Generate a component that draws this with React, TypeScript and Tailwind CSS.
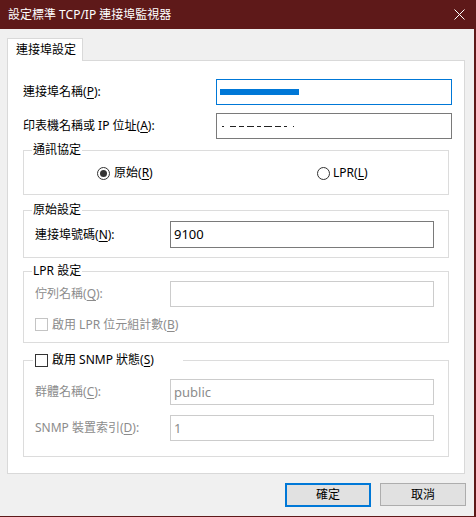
import React from "react";

const font = {
  fontFamily: '"Segoe UI", "Noto Sans", "Microsoft JhengHei", "Noto Sans CJK TC", sans-serif',
};

function Mn({ c }: { c: string }) {
  return (
    <>
      (<span className="underline underline-offset-[2px]">{c}</span>)
    </>
  );
}

function Group({
  legend,
  className,
  legendClass,
  children,
}: {
  legend: React.ReactNode;
  className: string;
  legendClass?: string;
  children?: React.ReactNode;
}) {
  return (
    <div className={`relative mx-[15px] border border-[#dcdcdc] ${className}`}>
      <div
        className={`absolute left-[8px] top-[-9px] flex h-[16px] items-center bg-white px-[1px] ${legendClass ?? ""}`}
      >
        {legend}
      </div>
      {children}
    </div>
  );
}

function Box({ disabled, className }: { disabled?: boolean; className?: string }) {
  return (
    <span
      className={`inline-block h-[13px] w-[13px] shrink-0 border bg-white ${
        disabled ? "border-[#c4c4c4]" : "border-[#333333]"
      } ${className ?? ""}`}
    />
  );
}

export default function App() {
  return (
    <div
      className="flex h-[517px] w-[476px] flex-col bg-[#5e1919] text-[12px] leading-none text-black"
      style={font}
    >
      {/* title bar */}
      <div className="flex h-[29px] items-center justify-between pl-[8px] pr-[11px] text-white">
        <span className="text-[12px]">設定標準 TCP/IP 連接埠監視器</span>
        <svg width="11" height="11" viewBox="0 0 11 11">
          <path d="M0.5 0.5 L10.5 10.5 M10.5 0.5 L0.5 10.5" stroke="#ffffff" strokeWidth="1" />
        </svg>
      </div>

      <div className="mb-[1px] mr-[2px] flex flex-1 flex-col bg-[#f0f0f0] px-[7px] pt-[9px]">
        {/* tab */}
        <div className="relative z-10 mb-[-1px] flex h-[23px] w-[76px] items-center border border-b-0 border-[#d9d9d9] bg-white pl-[8px]">
          連接埠設定
        </div>

        {/* tab panel */}
        <div className="flex h-[414px] w-[458px] flex-col border border-[#d9d9d9] bg-white">
          <div className="mt-[18px] flex h-[26px] items-center">
            <span className="ml-[15px] w-[193px]">
              連接埠名稱<Mn c="P" />:
            </span>
            <div className="flex h-[26px] w-[236px] items-center border border-[#0078d7] pl-[3px]">
              <span className="mt-[-1px] inline-block h-[6px] w-[79px] bg-[#0078d7]" />
            </div>
          </div>

          <div className="mt-[8px] flex h-[26px] items-center">
            <span className="ml-[15px] w-[193px]">
              印表機名稱或 IP 位址<Mn c="A" />:
            </span>
            <div className="flex h-[26px] w-[236px] items-center border border-[#7a7a7a] pl-[5px]">
              <svg width="76" height="3" viewBox="0 0 76 3">
                <g fill="#222">
                  <rect x="0" y="1" width="2" height="1" />
                  <rect x="8" y="1" width="6" height="1" />
                  <rect x="17" y="1" width="5" height="1" />
                  <rect x="25" y="1" width="7" height="1" />
                  <rect x="35" y="1" width="4" height="1" />
                  <rect x="42" y="1" width="8" height="1" />
                  <rect x="53" y="1" width="6" height="1" />
                  <rect x="62" y="1" width="3" height="1" />
                  <rect x="71" y="1" width="1" height="1" />
                </g>
              </svg>
            </div>
          </div>

          <Group legend="通訊協定" className="mt-[11px] h-[45px]">
            <div className="flex h-full items-center pt-[1px]">
              <div className="ml-[73px] flex w-[220px] items-center gap-[4px]">
                <span className="flex h-[13px] w-[13px] items-center justify-center rounded-full border border-[#333333]">
                  <span className="h-[7px] w-[7px] rounded-full bg-[#333333]" />
                </span>
                <span>
                  原始<Mn c="R" />
                </span>
              </div>
              <div className="flex items-center gap-[3px]">
                <span className="h-[13px] w-[13px] rounded-full border border-[#333333]" />
                <span>
                  LPR<Mn c="L" />
                </span>
              </div>
            </div>
          </Group>

          <Group legend="原始設定" className="mt-[15px] h-[48px]">
            <div className="mt-[10px] flex items-center">
              <span className="ml-[11px] w-[135px]">
                連接埠號碼<Mn c="N" />:
              </span>
              <div className="flex h-[27px] w-[264px] items-center border border-[#7a7a7a] pl-[3px] text-[13px]">
                9100
              </div>
            </div>
          </Group>

          <Group legend="LPR 設定" className="mt-[13px] h-[72px]">
            <div className="mt-[9px] flex items-center text-[#8c8c8c]">
              <span className="ml-[11px] w-[135px]">
                佇列名稱<Mn c="Q" />:
              </span>
              <div className="h-[26px] w-[264px] border border-[#cccccc]" />
            </div>
            <div className="mt-[11px] flex items-center gap-[4px] pl-[11px] text-[#8c8c8c]">
              <Box disabled />
              <span>
                啟用 LPR 位元組計數<Mn c="B" />
              </span>
            </div>
          </Group>

          <Group
            legend={
              <span className="flex items-center gap-[4px]">
                <Box />
                <span>
                  啟用 SNMP 狀態<Mn c="S" />
                </span>
              </span>
            }
            legendClass="left-[9px] w-[150px] pl-[2px]"
            className="mt-[17px] h-[97px]"
          >
            <div className="mt-[18px] flex items-center text-[#8c8c8c]">
              <span className="ml-[11px] w-[135px]">
                群體名稱<Mn c="C" />:
              </span>
              <div className="flex h-[26px] w-[264px] items-center border border-[#cccccc] pl-[3px] text-[13px]">
                public
              </div>
            </div>
            <div className="mt-[10px] flex items-center text-[#8c8c8c]">
              <span className="ml-[11px] w-[135px]">
                SNMP 裝置索引<Mn c="D" />:
              </span>
              <div className="flex h-[26px] w-[264px] items-center border border-[#cccccc] pl-[3px] text-[13px]">
                1
              </div>
            </div>
          </Group>
        </div>

        {/* buttons */}
        <div className="mt-[9px] flex justify-end gap-[9px] pr-[1px]">
          <button className="flex h-[24px] w-[86px] items-center justify-center border-2 border-[#0078d7] bg-[#e1e1e1]">
            確定
          </button>
          <button className="flex h-[23px] w-[86px] items-center justify-center border border-[#adadad] bg-[#e1e1e1]">
            取消
          </button>
        </div>
      </div>
    </div>
  );
}
